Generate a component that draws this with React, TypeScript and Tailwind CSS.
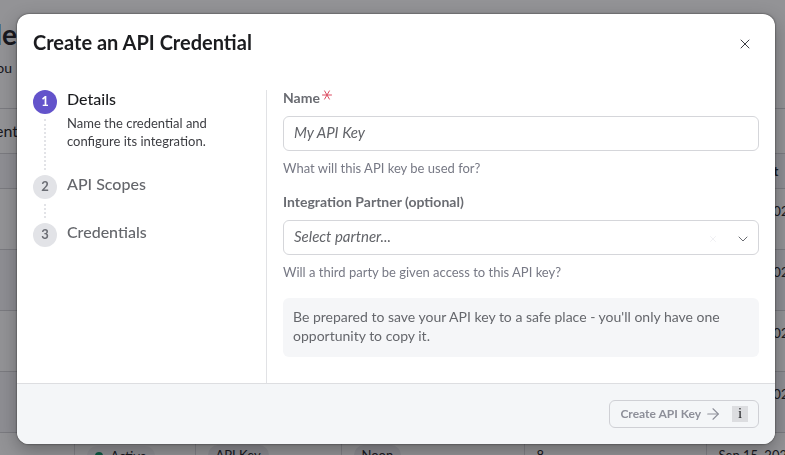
import React from 'react';
import { X, ChevronDown, ArrowRight } from 'lucide-react';

const STEPS = [
  { title: 'Details', description: 'Name the credential and configure its integration.' },
  { title: 'API Scopes' },
  { title: 'Credentials' },
];

const ROWS = [
  { status: 'Active', type: 'API Key', partner: 'Noon', scopes: '8', created: 'Aug 28, 2025' },
  { status: 'Active', type: 'API Key', partner: 'Noon', scopes: '3', created: 'Aug 21, 2025' },
  { status: 'Active', type: 'API Key', partner: 'Noon', scopes: '5', created: 'Aug 30, 2025' },
  { status: 'Active', type: 'API Key', partner: 'Noon', scopes: '2', created: 'Aug 29, 2025' },
  { status: 'Active', type: 'API Key', partner: 'Noon', scopes: '8', created: 'Sep 15, 2025' },
];

function CredentialsPage() {
  return (
    <div className="h-screen overflow-hidden bg-white text-[#26262b]" aria-hidden="true">
      <header className="h-[109px] border-b border-[#d4d4d8] pt-4">
        <h1 className="-ml-[200px] w-[217px] text-right text-[28px] leading-9 font-bold">API Console</h1>
        <p className="-ml-[100px] mt-1 w-[112px] text-right text-sm leading-6">You</p>
      </header>
      <div className="flex h-[45px] items-center border-b border-[#d4d4d8]">
        <span className="-ml-[100px] w-[118px] text-right text-base">Client</span>
      </div>
      <table className="w-full table-fixed border-collapse text-[13px] leading-5">
        <colgroup>
          <col className="w-[74px]" />
          <col className="w-[121px]" />
          <col className="w-[146px]" />
          <col className="w-[183px]" />
          <col className="w-[182px]" />
          <col />
        </colgroup>
        <thead>
          <tr className="h-[34px] border-b border-[#d4d4d8] bg-[#f6f6fa] text-left">
            <th />
            <th className="px-3">Status</th>
            <th className="px-3">Type</th>
            <th className="px-3">Partner</th>
            <th className="px-3">Scopes</th>
            <th className="px-3 whitespace-nowrap">Created at</th>
          </tr>
        </thead>
        <tbody>
          {ROWS.map((row, i) => (
            <tr key={i} className="h-[61px] border-b border-[#d4d4d8] align-top even:bg-[#f6f6fa]">
              <td />
              <td className="border-l border-[#dcdce0] px-3 pt-3">
                <span className="inline-flex items-center gap-2 rounded-full bg-[#f2f2f5] px-2">
                  <span className="size-2 rounded-full bg-[#12966a]" />
                  {row.status}
                </span>
              </td>
              <td className="border-l border-[#dcdce0] px-3 pt-3">
                <span className="inline-block rounded-full bg-[#ececf0] px-2">{row.type}</span>
              </td>
              <td className="border-l border-[#dcdce0] px-3 pt-3">
                <span className="inline-block rounded-full bg-[#ececf0] px-2">{row.partner}</span>
              </td>
              <td className="border-l border-[#dcdce0] px-3 pt-3">{row.scopes}</td>
              <td className="border-l border-[#dcdce0] px-3 pt-3 whitespace-nowrap">{row.created}</td>
            </tr>
          ))}
        </tbody>
      </table>
    </div>
  );
}

function Stepper() {
  return (
    <ol className="w-[249px] shrink-0 pl-4">
      {STEPS.map((step, i) => (
        <li key={step.title} className="flex gap-[10px]">
          <div className="flex w-6 flex-col items-center">
            <span
              className={
                i === 0
                  ? 'flex size-6 shrink-0 items-center justify-center rounded-full bg-[#6353cb] text-[13px] font-bold text-white'
                  : 'flex size-6 shrink-0 items-center justify-center rounded-full bg-[#e2e3e7] text-[13px] font-bold text-[#6b6d74]'
              }
            >
              {i + 1}
            </span>
            {i < STEPS.length - 1 && (
              <span className="my-[5px] min-h-[14px] flex-1 border-l-2 border-dotted border-[#e2e3e7]" />
            )}
          </div>
          <div className={i === 0 ? 'pb-[25px]' : ''}>
            <h3 className={i === 0 ? 'text-base leading-[18px] font-medium text-[#1b1c1f]' : 'text-base leading-[18px] font-medium text-[#65676c]'}>
              {step.title}
            </h3>
            {step.description && (
              <p className="mt-[6px] w-[160px] text-[13px] leading-[18px] text-[#3c3d42]">{step.description}</p>
            )}
          </div>
        </li>
      ))}
    </ol>
  );
}

export default function App() {
  return (
    <div className="relative font-['Lato',sans-serif]">
      <CredentialsPage />
      <div className="fixed inset-0 bg-[#0a0a10]/44 pt-[14px] pr-[10px] pl-[17px]">
        <div
          role="dialog"
          aria-labelledby="dialog-title"
          className="overflow-hidden rounded-xl bg-white shadow-[0_0_2px_rgba(0,0,0,0.7),0_6px_18px_rgba(0,0,0,0.3)]"
        >
          <div className="flex items-start justify-between pt-[14px] pr-5 pb-[18px] pl-4">
            <h2 id="dialog-title" className="text-xl leading-7 font-bold text-[#1b1c1f]">Create an API Credential</h2>
            <button type="button" aria-label="Close" className="mt-[6px] flex size-5 items-center justify-center text-[#3c3d42]">
              <X size={16} strokeWidth={1.5} />
            </button>
          </div>

          <div className="flex pt-4">
            <Stepper />
            <form className="min-w-0 flex-1 border-l border-[#e1e2e5] pr-4 pb-[26px] pl-4">
              <label htmlFor="name" className="flex h-4 items-center gap-[2px] text-sm font-bold text-[#6a6c72]">
                Name
                <svg width="10" height="10" viewBox="0 0 10 10" className="mb-[6px] text-[#dc4a60]" fill="none" stroke="currentColor" strokeWidth="1" strokeLinecap="round">
                  <path d="M.5 5h9M2.6 .9l4.8 8.2M7.4 .9L2.6 9.1" />
                </svg>
              </label>
              <input
                id="name"
                type="text"
                placeholder="My API Key"
                className="mt-[10px] block h-[35px] w-full rounded-md border border-[#d5d6da] px-[10px] pb-[3px] text-[15px] italic placeholder:text-[#626469]"
              />
              <p className="mt-2 text-[13px] leading-[18px] text-[#777985]">What will this API key be used for?</p>

              <label htmlFor="partner" className="mt-4 block text-sm leading-[18px] font-bold text-[#6a6c72]">
                Integration Partner (optional)
              </label>
              <div className="relative mt-[9px]">
                <select
                  id="partner"
                  className="block h-[35px] w-full appearance-none rounded-md border border-[#d5d6da] bg-white px-[10px] pb-[3px] text-[15px] text-[#626469] italic"
                >
                  <option>Select partner...</option>
                </select>
                <X size={10} strokeWidth={2} className="pointer-events-none absolute top-[14px] right-[41px] text-[#ededf0]" />
                <ChevronDown size={16} strokeWidth={1.5} className="pointer-events-none absolute top-[11px] right-2 text-[#6a6c72]" />
              </div>
              <p className="mt-2 text-[13px] leading-[18px] text-[#777985]">Will a third party be given access to this API key?</p>

              <p className="mt-[17px] rounded-md bg-[#f5f6f8] px-[10px] pt-[9px] pb-3 text-sm leading-[19px] text-[#65676c]">
                Be prepared to save your API key to a safe place - you'll only have one opportunity to copy it.
              </p>
            </form>
          </div>

          <footer className="flex h-[61px] items-center justify-end border-t border-[#dddee1] bg-[#f4f6f8] pr-4">
            <button type="button" className="flex h-7 items-center rounded-md border border-[#cfd0d5] px-[10px] text-xs font-bold text-[#8d8f99]">
              Create API Key
              <ArrowRight size={18} strokeWidth={1.5} className="ml-[3px]" />
              <span className="ml-[10px] flex size-4 items-center justify-center bg-[#dcdde0] font-['Liberation_Serif',serif] text-[15px] font-normal text-[#1b1c1f]">
                i
              </span>
            </button>
          </footer>
        </div>
      </div>
    </div>
  );
}
